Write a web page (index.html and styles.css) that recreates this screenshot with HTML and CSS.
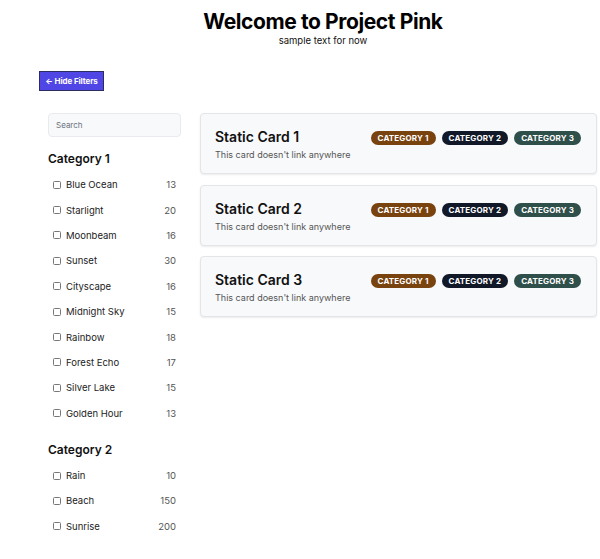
FILE: index.html
```html
<!DOCTYPE html>
<html>
<head>
<meta charset="utf-8">
<link rel="stylesheet" href="styles.css">
</head>
<body>
<header class="hero">
  <h1 class="hero-title">Welcome to Project Pink</h1>
  <p class="hero-sub">sample text for now</p>
</header>
<div class="toolbar">
  <button class="toggle-btn">← Hide Filters</button>
</div>
<div class="layout">
  <aside class="filters">
    <input class="search" type="text" placeholder="Search">
    <h2 class="group-title">Category 1</h2>
    <ul class="options">
      <li class="option"><span class="box"></span><span class="name">Blue Ocean</span><span class="count">13</span></li>
      <li class="option"><span class="box"></span><span class="name">Starlight</span><span class="count">20</span></li>
      <li class="option"><span class="box"></span><span class="name">Moonbeam</span><span class="count">16</span></li>
      <li class="option"><span class="box"></span><span class="name">Sunset</span><span class="count">30</span></li>
      <li class="option"><span class="box"></span><span class="name">Cityscape</span><span class="count">16</span></li>
      <li class="option"><span class="box"></span><span class="name">Midnight Sky</span><span class="count">15</span></li>
      <li class="option"><span class="box"></span><span class="name">Rainbow</span><span class="count">18</span></li>
      <li class="option"><span class="box"></span><span class="name">Forest Echo</span><span class="count">17</span></li>
      <li class="option"><span class="box"></span><span class="name">Silver Lake</span><span class="count">15</span></li>
      <li class="option"><span class="box"></span><span class="name">Golden Hour</span><span class="count">13</span></li>
    </ul>
    <h2 class="group-title second">Category 2</h2>
    <ul class="options">
      <li class="option"><span class="box"></span><span class="name">Rain</span><span class="count">10</span></li>
      <li class="option"><span class="box"></span><span class="name">Beach</span><span class="count">150</span></li>
      <li class="option"><span class="box"></span><span class="name">Sunrise</span><span class="count">200</span></li>
    </ul>
  </aside>
  <main class="cards">
    <div class="card">
      <div class="card-text">
        <h3 class="card-title">Static Card 1</h3>
        <p class="card-desc">This card doesn't link anywhere</p>
      </div>
      <div class="badges">
        <span class="badge b1">Category 1</span>
        <span class="badge b2">Category 2</span>
        <span class="badge b3">Category 3</span>
      </div>
    </div>
    <div class="card">
      <div class="card-text">
        <h3 class="card-title">Static Card 2</h3>
        <p class="card-desc">This card doesn't link anywhere</p>
      </div>
      <div class="badges">
        <span class="badge b1">Category 1</span>
        <span class="badge b2">Category 2</span>
        <span class="badge b3">Category 3</span>
      </div>
    </div>
    <div class="card">
      <div class="card-text">
        <h3 class="card-title">Static Card 3</h3>
        <p class="card-desc">This card doesn't link anywhere</p>
      </div>
      <div class="badges">
        <span class="badge b1">Category 1</span>
        <span class="badge b2">Category 2</span>
        <span class="badge b3">Category 3</span>
      </div>
    </div>
  </main>
</div>
</body>
</html>
```

FILE: styles.css
```css
* { box-sizing: border-box; }
body {
  margin: 0;
  font-family: Inter, "Noto Sans", sans-serif;
  color: #111;
  background: #fff;
}
.hero {
  text-align: center;
  padding: 9px 0 0 46px;
}
.hero-title {
  margin: 0;
  font-size: 21px;
  line-height: 26px;
  font-weight: 700;
  letter-spacing: -0.4px;
  color: #000;
}
.hero-sub {
  margin: 0;
  font-size: 9.5px;
  line-height: 12px;
  color: #111;
}
.toolbar {
  padding: 24px 0 0 39px;
}
.toggle-btn {
  display: block;
  width: 65px;
  height: 20px;
  padding: 0;
  background: #4f46e5;
  color: #fff;
  border: 1.5px solid #2a2d5e;
  font-family: Inter, sans-serif;
  font-size: 8px;
  font-weight: 700;
  letter-spacing: -0.1px;
}
.layout {
  display: flex;
  gap: 19px;
  padding: 22px 3px 0 48px;
}
.filters {
  width: 133px;
  flex: none;
}
.search {
  display: block;
  width: 133px;
  height: 24px;
  background: #f8f9fa;
  border: 1px solid #e8eaed;
  border-radius: 4px;
  padding: 0 7px;
  font-family: Inter, sans-serif;
  font-size: 8px;
  color: #333;
  outline: none;
}
.search::placeholder { color: #6b7280; }
.group-title {
  margin: 14px 0 6px;
  font-size: 12px;
  line-height: 15px;
  font-weight: 600;
  color: #111;
}
.group-title.second { margin-top: 16px; }
.options {
  list-style: none;
  margin: 0;
  padding: 0 5px 0 5px;
}
.option {
  display: flex;
  align-items: center;
  height: 25.4px;
  font-size: 9.5px;
  color: #222;
}
.box {
  width: 8px;
  height: 8px;
  border: 1px solid #777;
  border-radius: 1.5px;
  margin-right: 5px;
  flex: none;
}
.name { flex: 1; }
.count { color: #555; }
.cards {
  flex: 1;
  display: flex;
  flex-direction: column;
  gap: 10.5px;
}
.card {
  display: flex;
  justify-content: space-between;
  align-items: flex-start;
  height: 61px;
  background: #f8f9fb;
  border: 1px solid #e3e5e8;
  border-radius: 4px;
  box-shadow: 0 1px 2px rgba(0,0,0,0.08);
  padding: 14px 14px 0 14px;
}
.card-title {
  margin: 0;
  font-size: 14px;
  line-height: 18px;
  font-weight: 600;
  color: #111;
}
.card-desc {
  margin: 3px 0 0;
  font-size: 9px;
  line-height: 12px;
  color: #555;
}
.badges {
  display: flex;
  gap: 6px;
  padding-top: 3px;
  padding-right: 1px;
}
.badge {
  display: inline-flex;
  align-items: center;
  height: 14px;
  padding: 0 7px;
  border-radius: 7px;
  color: #fff;
  font-size: 8px;
  font-weight: 700;
  text-transform: uppercase;
  letter-spacing: 0.15px;
}
.b1 { background: #78430f; }
.b2 { background: #111827; }
.b3 { background: #2f4f4a; }
```
